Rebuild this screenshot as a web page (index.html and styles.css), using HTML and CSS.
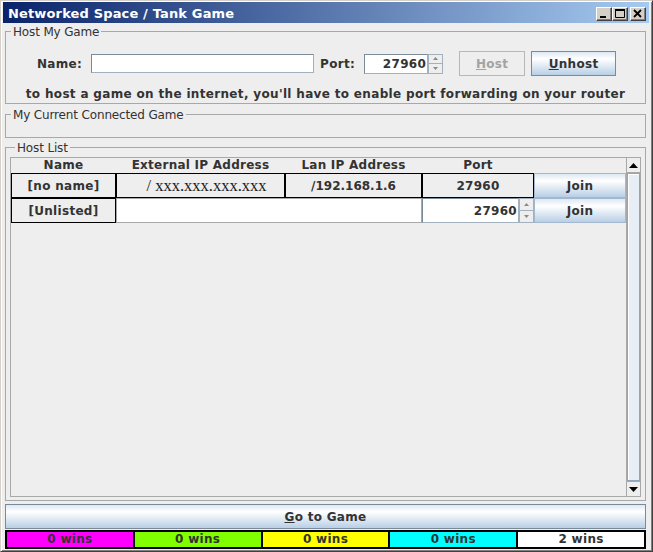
FILE: index.html
```html
<!DOCTYPE html>
<html>
<head>
<meta charset="utf-8">
<title>Networked Space / Tank Game</title>
<link rel="stylesheet" href="styles.css">
</head>
<body>
<div class="window">
  <div class="titlebar">
    <span class="title">Networked Space / Tank Game</span>
    <div class="wbtns">
      <span class="wbtn"><svg width="14" height="12" viewBox="0 0 14 12"><rect x="3" y="8" width="6" height="2" fill="#000"/></svg></span>
      <span class="wbtn"><svg width="14" height="12" viewBox="0 0 14 12"><path d="M2.5 1.5h9v8h-9z" fill="none" stroke="#000"/><rect x="2" y="1" width="10" height="2" fill="#000"/></svg></span>
      <span class="wbtn close"><svg width="14" height="12" viewBox="0 0 14 12"><path d="M3 2l7 7M10 2l-7 7" stroke="#000" stroke-width="1.8"/></svg></span>
    </div>
  </div>
  <div class="content">
    <fieldset class="group host">
      <legend>Host My Game</legend>
      <div class="hostrow">
        <span class="lbl">Name:</span>
        <span class="field namefield"></span>
        <span class="lbl port">Port:</span>
        <span class="spinner top-spin">
          <span class="field spinfield">27960</span>
          <span class="arrows">
            <span class="arr"><svg width="5" height="3" viewBox="0 0 5 3"><path d="M0 3L2.5 0L5 3z" fill="#8a8a8a"/></svg></span>
            <span class="arr"><svg width="5" height="3" viewBox="0 0 5 3"><path d="M0 0L2.5 3L5 0z" fill="#8a8a8a"/></svg></span>
          </span>
        </span>
        <span class="btn disabled hostbtn"><u>H</u>ost</span>
        <span class="btn unhostbtn"><u>U</u>nhost</span>
      </div>
      <p class="note">to host a game on the internet, you'll have to enable port forwarding on your router</p>
    </fieldset>

    <fieldset class="group current">
      <legend>My Current Connected Game</legend>
    </fieldset>

    <fieldset class="group list">
      <legend>Host List</legend>
      <div class="scrollpane">
        <div class="viewport">
          <div class="table">
            <div class="th">Name</div>
            <div class="th">External IP Address</div>
            <div class="th">Lan IP Address</div>
            <div class="th">Port</div>
            <div class="th"></div>

            <div class="cell">[no name]</div>
            <div class="cell ext">/ xxx.xxx.xxx.xxx</div>
            <div class="cell lan">/192.168.1.6</div>
            <div class="cell">27960</div>
            <div class="btn join">Join</div>

            <div class="cell">[Unlisted]</div>
            <div class="field rowfield"></div>
            <div class="spinner row-spin">
              <span class="field spinfield">27960</span>
              <span class="arrows">
                <span class="arr"><svg width="5" height="3" viewBox="0 0 5 3"><path d="M0 3L2.5 0L5 3z" fill="#8a8a8a"/></svg></span>
                <span class="arr"><svg width="5" height="3" viewBox="0 0 5 3"><path d="M0 0L2.5 3L5 0z" fill="#8a8a8a"/></svg></span>
              </span>
            </div>
            <div class="btn join">Join</div>
          </div>
        </div>
        <div class="scrollbar">
          <span class="sbtn"><svg width="9" height="5" viewBox="0 0 9 5"><path d="M0 5L4.5 0L9 5z" fill="#000"/></svg></span>
          <span class="thumb"></span>
          <span class="sbtn"><svg width="9" height="5" viewBox="0 0 9 5"><path d="M0 0L4.5 5L9 0z" fill="#000"/></svg></span>
        </div>
      </div>
    </fieldset>

    <div class="btn go"><u>G</u>o to Game</div>

    <div class="wins">
      <div class="win magenta">0 wins</div>
      <div class="win green">0 wins</div>
      <div class="win yellow">0 wins</div>
      <div class="win cyan">0 wins</div>
      <div class="win white">2 wins</div>
    </div>
  </div>
</div>
</body>
</html>
```

FILE: styles.css
```css
* { box-sizing: border-box; }
html, body { margin: 0; padding: 0; }
body {
  width: 653px;
  height: 552px;
  overflow: hidden;
  background: #eeeeee;
  font-family: "DejaVu Sans", sans-serif;
  font-size: 12px;
  color: #333333;
}
.window {
  width: 653px;
  height: 552px;
  display: flex;
  flex-direction: column;
  background: #eeeeee;
  border: 1px solid #d4d0c8;
  border-right-color: #404040;
  border-bottom-color: #404040;
  box-shadow: inset 1px 1px 0 #ffffff, inset -1px -1px 0 #808080;
  padding: 1px 3px 2px 2px;
}
.titlebar {
  height: 21px;
  flex: none;
  display: flex;
  align-items: center;
  justify-content: space-between;
  padding-left: 5px;
  padding-right: 3px;
  padding-top: 2px;
  background: linear-gradient(to right, #0a246a, #a6caf0);
}
.title {
  color: #ffffff;
  font-weight: bold;
  font-size: 13px;
  letter-spacing: 0.15px;
}
.wbtns { display: flex; align-items: center; }
.wbtn {
  width: 16px;
  height: 14px;
  display: flex;
  align-items: center;
  justify-content: center;
  background: #d4d0c8;
  border: 1px solid;
  border-color: #ffffff #404040 #404040 #ffffff;
  box-shadow: inset -1px -1px 0 #808080;
}
.wbtn.close { margin-left: 2px; }

.content {
  flex: 1;
  display: flex;
  flex-direction: column;
  padding: 0 3px 0 2px;
  min-height: 0;
}
.group {
  margin: 0;
  padding: 0;
  min-width: 0;
  border: 1px solid #a8a8a8;
}
.group legend {
  margin-left: 5px;
  padding: 2px 2px 0;
  line-height: 12px;
  font-size: 12px;
  letter-spacing: -0.15px;
  color: #333333;
}
.host { margin-top: 1px; padding-bottom: 2px; }
.hostrow {
  display: flex;
  align-items: center;
  height: 25px;
  margin-top: 13px;
  padding-left: 31px;
}
.lbl { font-weight: bold; letter-spacing: 0.3px; }
.lbl.port { margin-left: 6px; }
.field {
  background: #ffffff;
  border: 1px solid #7a8a99;
  border-bottom-color: #a3b0bd;
  border-right-color: #a3b0bd;
  display: block;
}
.namefield { width: 223px; height: 19px; margin-left: 9px; }
.spinner { display: flex; }
.top-spin { width: 79px; height: 20px; margin-left: 9px; }
.spinfield {
  flex: 1;
  display: flex;
  align-items: center;
  justify-content: flex-end;
  font-weight: bold;
  letter-spacing: 0.3px;
  padding-right: 1px;
}
.arrows {
  width: 15px;
  display: flex;
  flex-direction: column;
}
.arr {
  flex: 1;
  display: flex;
  align-items: center;
  justify-content: center;
  background: #eeeeee;
  border: 1px solid #a3b0bd;
}
.arr + .arr { border-top: none; }
.btn {
  display: flex;
  align-items: center;
  justify-content: center;
  font-weight: bold;
  letter-spacing: 0.3px;
  color: #333333;
  border: 1px solid #7a8a99;
  background: linear-gradient(to bottom, #dde8f3 0%, #ffffff 30%, #b8cfe5 100%);
}
.btn.disabled {
  background: #eeeeee;
  border-color: #b8b8b8;
  color: #a3a3a3;
}
.hostbtn { width: 66px; height: 25px; margin-left: 16px; }
.unhostbtn { width: 85px; height: 25px; margin-left: 6px; }
.note {
  margin: 11px 0 0;
  line-height: 14px;
  text-align: center;
  font-weight: bold;
  letter-spacing: 0.33px;
}
.current { margin-top: 3px; height: 31px; }
.list {
  margin-top: 2px;
  flex: 1;
  min-height: 0;
  display: flex;
  flex-direction: column;
  padding: 3px 4px 3px 4px;
}
.scrollpane {
  flex: 1;
  display: flex;
  border: 1px solid #a8a8a8;
  min-height: 0;
}
.viewport { flex: 1; background: #eeeeee; }
.table {
  display: grid;
  grid-template-columns: 105px 169px 137px 112px 92px;
  grid-auto-rows: 25px;
  grid-template-rows: 15px;
}
.th {
  font-weight: bold;
  letter-spacing: 0.25px;
  text-align: center;
  line-height: 15px;
}
.cell {
  border: 1px solid #000000;
  background: #eeeeee;
  font-weight: bold;
  letter-spacing: 0.3px;
  display: flex;
  align-items: center;
  justify-content: center;
}
.cell.lan { letter-spacing: 0; }
.cell.ext {
  font-family: "Liberation Serif", serif;
  font-weight: normal;
  letter-spacing: 0;
  font-size: 16.5px;
  color: #1a1a1a;
  padding-left: 12px;
}
.join { border-color: #a3b8cc; }
.rowfield { grid-column: span 2; border-color: #a8a8a8; }
.scrollbar {
  width: 15px;
  display: flex;
  flex-direction: column;
  background: #eeeeee;
  border-left: 1px solid #a8a8a8;
}
.sbtn {
  height: 15px;
  display: flex;
  align-items: center;
  justify-content: center;
  border-bottom: 1px solid #a8a8a8;
}
.sbtn:last-child { border-bottom: none; border-top: 1px solid #a8a8a8; }
.thumb {
  flex: 1;
  border: 1px solid #93a5b8;
  background: #e8eef5;
  box-shadow: inset 1px 1px 0 #ffffff;
}
.go { height: 25px; margin-top: 3px; flex: none; }
.wins {
  margin-top: 1px;
  height: 19px;
  flex: none;
  display: grid;
  grid-template-columns: repeat(5, 1fr);
  gap: 2px;
  padding: 2px;
  background: #000000;
}
.win {
  text-align: center;
  font-weight: bold;
  letter-spacing: 0.3px;
  line-height: 15px;
  color: #333333;
}
.magenta { background: #ff00ff; }
.green { background: #80ff00; }
.yellow { background: #ffff00; }
.cyan { background: #00ffff; }
.white { background: #ffffff; }
```
